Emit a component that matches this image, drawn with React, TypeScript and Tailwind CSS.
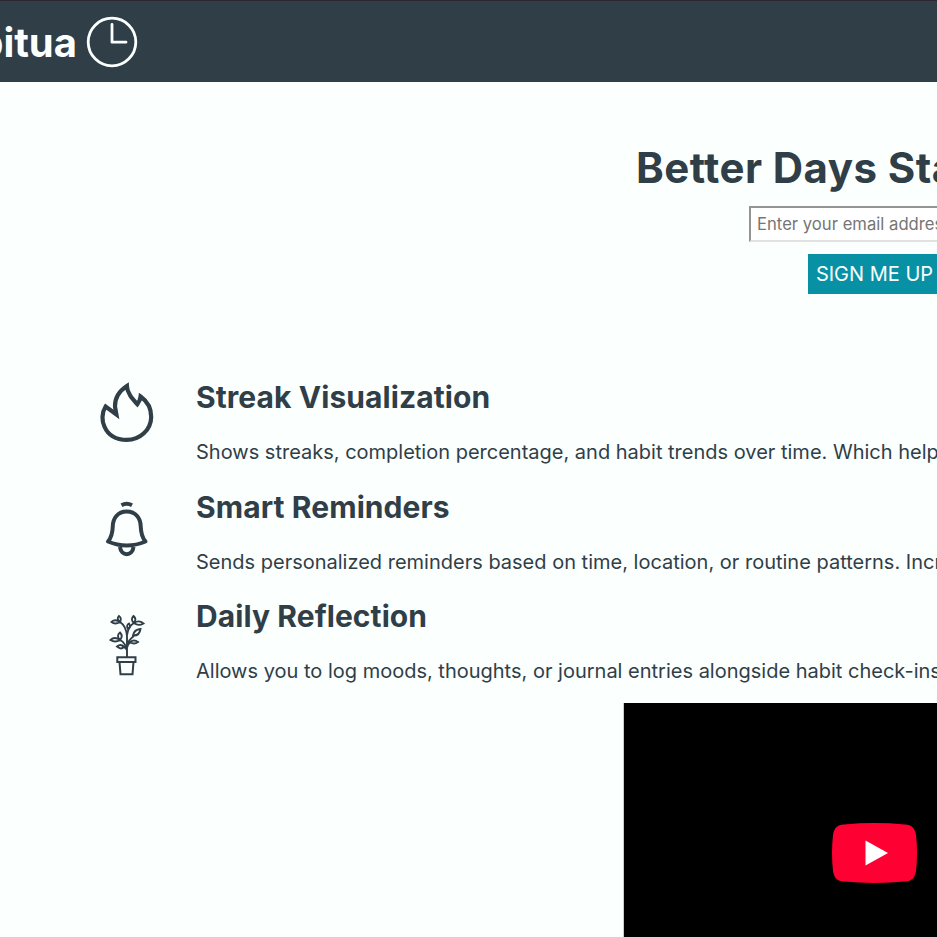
import type { ReactNode } from "react";

function ClockIcon() {
  return (
    <svg className="h-[52px] w-[52px] shrink-0" viewBox="0 0 52 52" fill="none" stroke="#fbfffe" strokeWidth="2.8">
      <circle cx="26" cy="26" r="23.8" />
      <path d="M26 8.5V26.2H40" strokeLinecap="round" strokeLinejoin="round" />
    </svg>
  );
}

function FlameIcon() {
  return (
    <svg className="h-20 w-20" viewBox="0 0 80 80" fill="none" stroke="#303e48" strokeWidth="4.2">
      <path d="M36.900 16C30 20.500 24.800 27.500 25 36.500L26.400 44.500L15.600 36.500C11.500 43 11.800 51 14.400 56.500C18.500 66 27.500 69.900 36.800 69.900C50 69.900 61 60 61.200 47C61.300 38 56.800 31 50.600 26.500C50.300 29.500 49 32 47.300 34.200C42.500 29 37.200 23.500 36.900 16Z" />
    </svg>
  );
}

function BellIcon() {
  return (
    <svg className="h-20 w-20" viewBox="0 0 80 80" fill="none" stroke="#303e48" strokeWidth="4" strokeLinejoin="round">
      <path d="M31.500 15.200Q36.700 12.300 42 15.200" />
      <path d="M36.700 21.500C27.500 21.500 23 28.500 22.800 36C22.600 43.500 21.500 47.500 18 51.500Q36.700 59.500 55.500 51.500C52 47.500 50.900 43.500 50.700 36C50.500 28.500 46 21.500 36.700 21.500Z" />
      <path d="M30 57C31 66.500 42.500 66.500 43.500 57" />
    </svg>
  );
}

function PlantIcon() {
  return (
    <svg className="h-20 w-20" viewBox="0 0 80 80" fill="none" stroke="#303e48" strokeWidth="1.9">
      <path d="M37 52V31C36.500 25 34.500 20 30 17M37 30C38 24 40 20 44 18M37 41C38 36 41 33 44 31M37 46C36 40 34 37 30 35M37 45Q34 41 32 41M37 43Q38 38 41 37" />
      <path d="M30 17Q25 20 21.500 17Q25 13.500 30 17ZM30 17Q26 14 29 11Q32 13 30 17Z" />
      <path d="M44 18Q40 14.500 43.500 11Q47 14 44 18ZM44 18Q49 14.500 53.500 18.500Q48.500 21.500 44 18ZM38 24Q35.800 20.500 39 18.500Q41.500 22 38 24Z" />
      <path d="M43 30.500Q44 24.500 50.500 24Q49.500 31 43 30.500ZM40 37Q44 34 48 37Q44 40 40 37Z" />
      <path d="M30 35Q25 38 20.500 35Q24.500 31 30 35ZM30 35Q26 30.500 30 27.500Q33.500 31 30 35ZM34 42Q31 45 27 41.500Q31 38.500 34 42Z" />
      <path strokeWidth="2" d="M27.300 52.300H45.500V57H27.300ZM29.500 57L30.500 69.300H42.500L43.500 57" />
    </svg>
  );
}

function Feature({ icon, title, children }: { icon: ReactNode; title: string; children: string }) {
  return (
    <article className="flex h-[109.5px] items-start">
      <div className="w-[106px] shrink-0">{icon}</div>
      <div className="whitespace-nowrap pt-[7px]">
        <h2 className="text-[30px] leading-10 font-bold tracking-[0.08px]">{title}</h2>
        <p className="mt-[20px] text-[20px] leading-[30px]">{children}</p>
      </div>
    </article>
  );
}

export default function App() {
  return (
    <div className="h-screen w-full overflow-hidden bg-[#fbfffe] font-['Inter',sans-serif] text-[#303e48]">
      <header className="flex h-[82px] items-center border-t border-[#2b2630] bg-[#303e48] text-[#fbfffe]">
        <div className="flex w-[77px] shrink-0 justify-end pt-0.5">
          <span className="text-[40px] leading-[50px] font-bold">Habitua</span>
        </div>
        <div className="ml-[9px]"><ClockIcon /></div>
      </header>
      <section className="ml-[249px] flex h-[288px] w-[1251px] flex-col items-center pt-[60px]">
        <h1 className="w-full whitespace-nowrap pl-[387px] text-[42px] leading-[52px] font-bold tracking-[0.44px]">Better Days Start Here</h1>
        <input
          type="email"
          placeholder="Enter your email address"
          className="mt-[12px] h-[36px] w-[251px] border-2 border-t-[#949494] border-l-[#949494] border-r-[#e2e2e2] border-b-[#e2e2e2] bg-white px-[6px] text-[16.67px] placeholder:text-[#757575]"
        />
        <button className="mt-3 h-10 bg-[#0891a5] px-2 text-[20px] text-[#fbfffe]">SIGN ME UP</button>
      </section>
      <main className="pl-[90px]">
        <Feature icon={<FlameIcon />} title="Streak Visualization">
          Shows streaks, completion percentage, and habit trends over time. Which helps you stay motivated.
        </Feature>
        <Feature icon={<div className="pt-2.5"><BellIcon /></div>} title="Smart Reminders">
          Sends personalized reminders based on time, location, or routine patterns. Increasing consistency.
        </Feature>
        <Feature icon={<div className="pt-4"><PlantIcon /></div>} title="Daily Reflection">
          Allows you to log moods, thoughts, or journal entries alongside habit check-ins.
        </Feature>
      </main>
      <div className="ml-[623px] mt-[4.5px] flex h-[300px] w-[502px] items-center justify-center border-x border-[#c8cccb] bg-black">
        <svg className="h-[60px] w-[85px]" viewBox="0 0 85 60">
          <path fill="#ff0033" d="M12 1.500Q42.500-1.300 73 1.500C80 2 82.800 5 84 12Q86 30 84 48C82.800 55 80 58 73 58.500Q42.500 61.300 12 58.500C5 58 2.200 55 1 48Q-1 30 1 12C2.200 5 5 2 12 1.500Z" />
          <path fill="white" d="M33.500 17.500V42.500L56 30Z" />
        </svg>
      </div>
    </div>
  );
}
